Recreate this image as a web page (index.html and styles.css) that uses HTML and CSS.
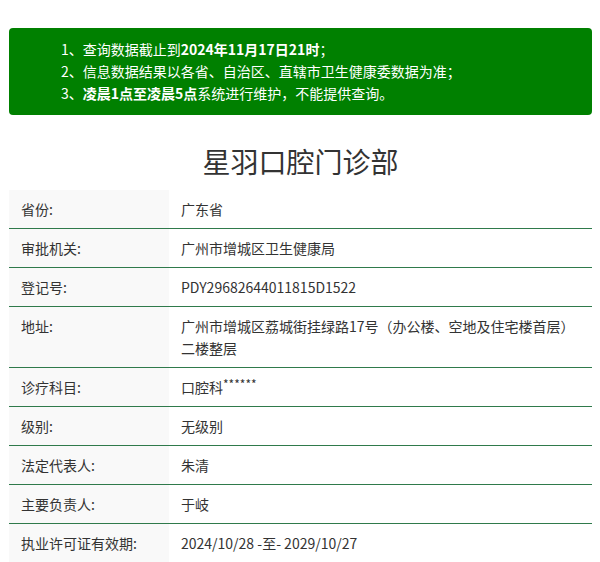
FILE: index.html
```html
<!DOCTYPE html>
<html lang="zh-CN">
<head>
<meta charset="utf-8">
<title>星羽口腔门诊部</title>
<link rel="stylesheet" href="styles.css">
</head>
<body>
<div class="page">
  <div class="notice">
    <p>1、查询数据截止到<b>2024年11月17日21时</b>；</p>
    <p>2、信息数据结果以各省、自治区、直辖市卫生健康委数据为准；</p>
    <p>3、<b>凌晨1点至凌晨5点</b>系统进行维护，不能提供查询。</p>
  </div>
  <h1 class="title">星羽口腔门诊部</h1>
  <table class="info">
    <tr><th>省份:</th><td>广东省</td></tr>
    <tr><th>审批机关:</th><td>广州市增城区卫生健康局</td></tr>
    <tr><th>登记号:</th><td>PDY29682644011815D1522</td></tr>
    <tr><th>地址:</th><td>广州市增城区荔城街挂绿路17号（办公楼、空地及住宅楼首层）二楼整层</td></tr>
    <tr><th>诊疗科目:</th><td>口腔科<span class="stars">******</span></td></tr>
    <tr><th>级别:</th><td>无级别</td></tr>
    <tr><th>法定代表人:</th><td>朱清</td></tr>
    <tr><th>主要负责人:</th><td>于岐</td></tr>
    <tr><th>执业许可证有效期:</th><td>2024/10/28 -至- 2029/10/27</td></tr>
  </table>
</div>
</body>
</html>
```
FILE: styles.css
```css
html, body {
  margin: 0;
  padding: 0;
  background: #fff;
}
body {
  font-family: "Noto Sans CJK SC", "Noto Sans", sans-serif;
  font-size: 14px;
  color: #333;
}
.page {
  padding: 28px 8px 0 9px;
}
.notice {
  background: #008000;
  color: #fff;
  border-radius: 4px;
  padding: 10px 12px 11px 52px;
  line-height: 22px;
  font-size: 14px;
}
.notice p {
  margin: 0;
}
.notice b {
  font-weight: bold;
}
.title {
  margin: 0;
  padding: 27px 0 0;
  height: 48px;
  line-height: 38px;
  text-align: center;
  font-size: 28px;
  font-weight: normal;
  color: #333;
}
.info {
  width: 100%;
  border-collapse: collapse;
}
.info th, .info td {
  text-align: left;
  font-weight: normal;
  vertical-align: top;
  padding: 8px 12px;
  line-height: 22px;
  border-bottom: 1px solid #2f7a4b;
}
.info th {
  width: 136px;
  background: #f9f9f9;
}
.info tr:last-child th, .info tr:last-child td {
  border-bottom: none;
}
.stars {
  font-size: 12px;
  vertical-align: top;
  line-height: 16px;
}
```
